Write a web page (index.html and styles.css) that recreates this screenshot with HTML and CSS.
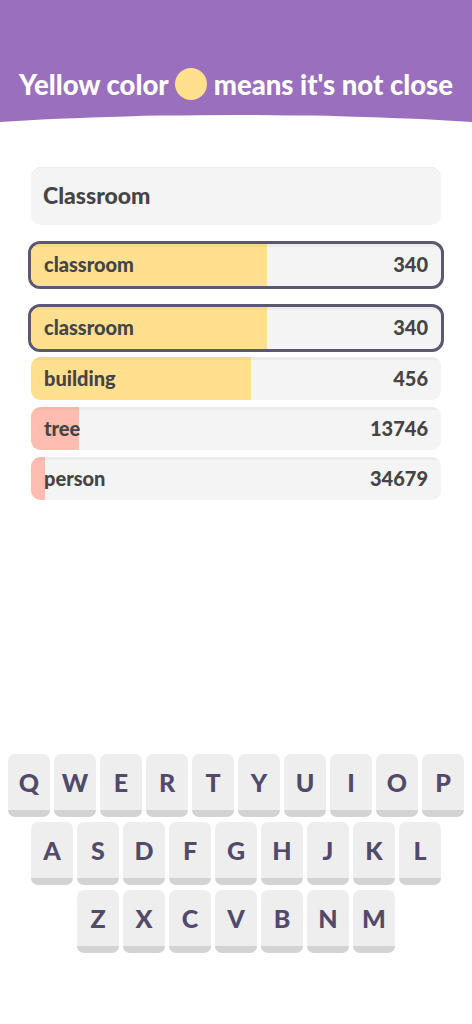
FILE: index.html
```html
<!DOCTYPE html>
<html>
<head>
<meta charset="utf-8">
<link rel="stylesheet" href="styles.css">
</head>
<body>
<header class="header">
  <h1 class="title">Yellow color <span class="dot"></span> means it's not close</h1>
</header>
<main class="game">
  <div class="input">Classroom</div>
  <div class="row current">
    <div class="fill yellow" style="width:57.5%"></div>
    <span class="word">classroom</span><span class="num">340</span>
  </div>
  <div class="list">
    <div class="row current">
      <div class="fill yellow" style="width:57.5%"></div>
      <span class="word">classroom</span><span class="num">340</span>
    </div>
    <div class="row">
      <div class="fill yellow" style="width:53.7%"></div>
      <span class="word">building</span><span class="num">456</span>
    </div>
    <div class="row">
      <div class="fill pink" style="width:11.7%"></div>
      <span class="word">tree</span><span class="num">13746</span>
    </div>
    <div class="row">
      <div class="fill pink" style="width:3.4%"></div>
      <span class="word">person</span><span class="num">34679</span>
    </div>
  </div>
</main>
<section class="keyboard">
  <div class="krow">
    <div class="key">Q</div><div class="key">W</div><div class="key">E</div><div class="key">R</div><div class="key">T</div><div class="key">Y</div><div class="key">U</div><div class="key">I</div><div class="key">O</div><div class="key">P</div>
  </div>
  <div class="krow">
    <div class="key">A</div><div class="key">S</div><div class="key">D</div><div class="key">F</div><div class="key">G</div><div class="key">H</div><div class="key">J</div><div class="key">K</div><div class="key">L</div>
  </div>
  <div class="krow">
    <div class="key">Z</div><div class="key">X</div><div class="key">C</div><div class="key">V</div><div class="key">B</div><div class="key">N</div><div class="key">M</div>
  </div>
</section>
</body>
</html>
```
FILE: styles.css
```css
* { box-sizing: border-box; }
html, body { margin: 0; padding: 0; background: #ffffff; }
body {
  width: 472px;
  height: 1024px;
  font-family: "Lato", "Open Sans", sans-serif;
  overflow: hidden;
}
.header {
  position: relative;
  height: 122px;
  background: #9a6fbd;
  overflow: hidden;
  display: flex;
  justify-content: center;
  padding-top: 67px;
}
.header::after {
  content: "";
  position: absolute;
  left: 50%;
  top: 115px;
  width: 756px;
  height: 64px;
  margin-left: -378px;
  border-radius: 50%;
  background: #ffffff;
}
.title {
  margin: 0;
  color: #ffffff;
  font-size: 27.5px;
  font-weight: 900;
  line-height: 36px;
  height: 36px;
  white-space: nowrap;
  display: flex;
  align-items: center;
}
.dot {
  display: inline-block;
  width: 32px;
  height: 32px;
  border-radius: 50%;
  background: #ffe08f;
  margin: 0 7px 2px 6px;
}
.game {
  padding: 45px 31px 0 31px;
}
.input {
  height: 58px;
  background: #f4f4f4;
  border-radius: 10px;
  padding: 0 12px 3px;
  display: flex;
  align-items: center;
  font-size: 23px;
  font-weight: 900;
  color: #454545;
  box-shadow: inset 0 1px 0 #ececec;
}
.row {
  position: relative;
  height: 43px;
  background: #f4f4f4;
  border-radius: 9px;
  overflow: hidden;
  display: flex;
  align-items: center;
  justify-content: space-between;
  padding: 0 13px 2px;
  font-size: 20px;
  font-weight: 900;
  color: #454545;
}
.row::before {
  content: "";
  position: absolute;
  left: 0; right: 0; top: 0;
  height: 3px;
  background: rgba(0,0,0,0.035);
  z-index: 1;
}
.row.current {
  overflow: visible;
  outline: 3px solid #5b5872;
  border-radius: 9px;
  height: 42px;
}
.game > .row.current { margin-top: 19px; }
.list {
  margin-top: 21px;
  display: flex;
  flex-direction: column;
  gap: 7px;
}
.list .row.current { margin-bottom: 1px; }
.fill {
  position: absolute;
  left: 0; top: 0; bottom: 0;
  border-radius: 9px 0 0 9px;
}
.yellow { background: #ffe08f; }
.pink { background: #ffbdb2; }
.word, .num { position: relative; z-index: 2; }
.keyboard {
  position: absolute;
  left: 0; right: 0; top: 754px;
  display: flex;
  flex-direction: column;
  align-items: center;
  gap: 5px;
}
.krow {
  display: flex;
  gap: 4px;
}
.key {
  width: 42px;
  height: 63px;
  background: #eeeeee;
  border-radius: 7px;
  border-bottom: 7px solid #d3d3d3;
  display: flex;
  align-items: center;
  justify-content: center;
  font-size: 25px;
  font-weight: 900;
  color: #514a6a;
}
```
